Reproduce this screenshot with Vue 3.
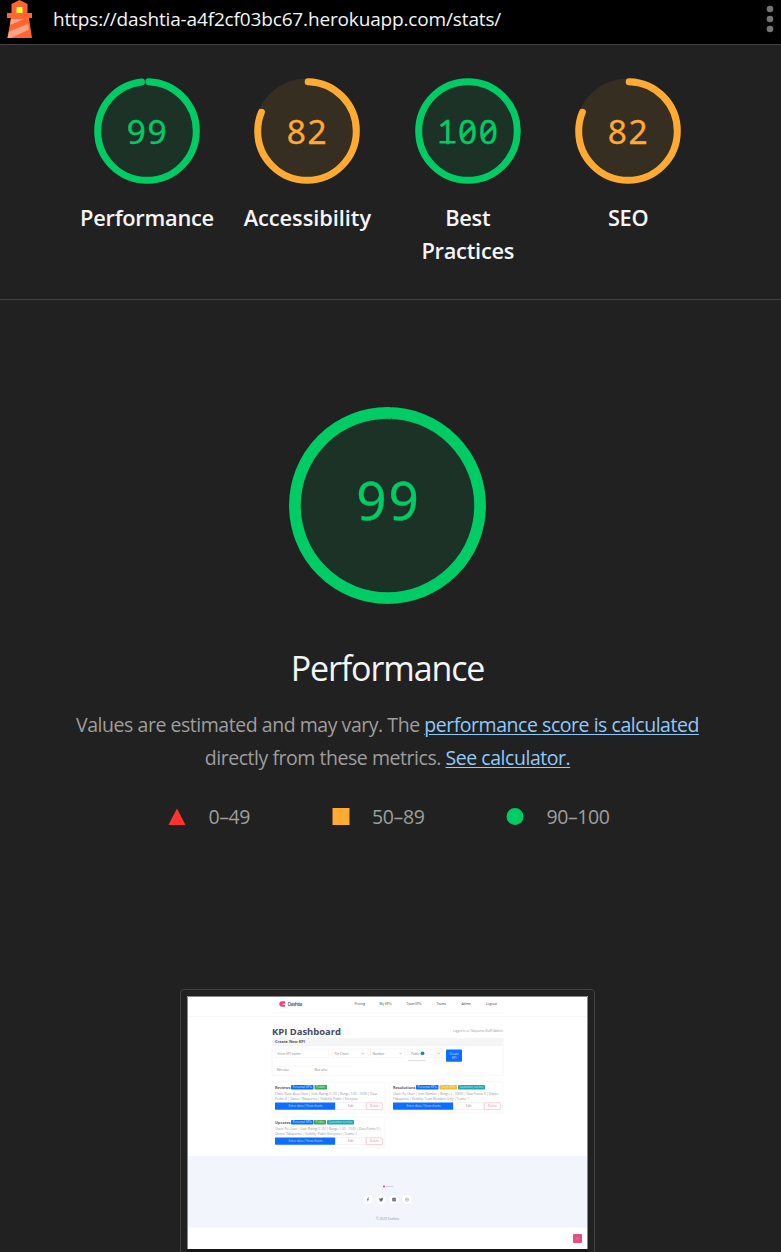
<script setup>
const gauges = [
  { label: 'Performance', score: 99, tone: 'pass', arc: 97.6, start: 0.6 },
  { label: 'Accessibility', score: 82, tone: 'average', arc: 80.8, start: 0.4 },
  { label: 'Best Practices', score: 100, tone: 'pass', arc: 100, start: 0 },
  { label: 'SEO', score: 82, tone: 'average', arc: 80.8, start: 0.4 },
]
const nav = [
  ['Pricing', 354.5, 10.5], ['My KPIs', 379.5, 12], ['Team KPIs', 406.5, 15],
  ['Teams', 436.5, 9.5], ['Admin', 461.5, 9.5], ['Logout', 486, 11],
]
const cards = [
  {
    x: 275, y: 1084.5, name: 'Reviews', nameW: 15.5,
    tags: [['Personal KPIs', 291, 22.5, '#0d6efd'], ['Public', 314.5, 12.5, '#34a853']],
    lines: [['Chart: Data: Area Chart | Unit: Rating (1-10) | Range: 1.00 - 10.00 | Data', 102], ['Points: 8 | Owner: Tkbaparina | Visibility: Public | Everyone', 83]],
  },
  {
    x: 393, y: 1084.5, name: 'Resolutions', nameW: 22.5,
    tags: [['Personal KPIs', 416, 22.5, '#0d6efd'], ['Team KPIs', 439.5, 17.5, '#fbbc2c'], ['Customer service', 458, 27, '#20a8b0']],
    lines: [['Chart: Pie Chart | Unit: Number | Range: + - 10000 | Data Points: 0 | Owner:', 106], ['Tkbaparina | Visibility: Team Members Only | Teams: 1', 76]],
  },
  {
    x: 275, y: 1119.5, name: 'Upvotes', nameW: 15.5,
    tags: [['Personal KPIs', 291, 22.5, '#0d6efd'], ['Public', 314, 12, '#34a853'], ['Customer service', 327, 27, '#20a8b0']],
    lines: [['Chart: Pie Chart | Unit: Rating (1-10) | Range: 1.00 - 10.00 | Data Points: 0 |', 106], ['Owner: Tkbaparina | Visibility: Public (Everyone) | Teams: 1', 82]],
  },
]
</script>

<template>
  <main class="report">
    <header class="topbar">
      <svg class="logo" width="26" height="39" viewBox="0 0 26 39">
        <path fill="#ff6633" d="M4.500 4 12.500 0l8 4v9h4.500v5h-3l3 20H.500L4 18H0v-5h4.500z" />
        <path fill="#ffa385" d="M4 19h13L3 25zM2 31.500l19-7.500 1 5.500-18 8.500H.500z" />
        <path fill="#ffff33" d="M9.500 7h6v6h-6z" />
      </svg>
      <span class="url">https://dashtia-a4f2cf03bc67.herokuapp.com/stats/</span>
      <svg class="menu" width="8" height="29" viewBox="0 0 8 29">
        <circle cx="4" cy="4" r="3.300" /><circle cx="4" cy="14" r="3.300" /><circle cx="4" cy="24" r="3.300" />
      </svg>
    </header>

    <section class="scores">
      <div v-for="g in gauges" :key="g.label" class="gauge" :class="g.tone">
        <svg width="106" height="106" viewBox="0.500 0.500 106 106">
          <circle class="disc" cx="53.500" cy="53.500" r="52.500" />
          <circle
            class="arc" cx="53.500" cy="53.500" r="49.300" pathLength="100"
            :stroke-dasharray="g.arc === 100 ? 'none' : `${g.arc} 100`"
            :stroke-dashoffset="-g.start" transform="rotate(-90 53.500 53.500)"
          />
          <text class="num" x="54" y="66">{{ g.score }}</text>
          <path v-if="g.score === 100" class="foot" d="M25 64.700h16" />
        </svg>
        <span class="label">{{ g.label }}</span>
      </div>
    </section>

    <section class="category">
      <svg class="big pass" width="197" height="197" viewBox="0.500 0.500 197 197">
        <circle class="disc" cx="99" cy="99" r="97" />
        <circle class="arc" cx="99" cy="99" r="92.600" />
        <path d="M102 .2l2 0-1 .7zM102 12.200l2 0-1-.7z" fill="#1f3027" />
        <text class="num" x="100" y="113.500">99</text>
      </svg>
      <h1>Performance</h1>
      <p class="desc">
        <span class="l1">Values are estimated and may vary. The <a>performance score is calculated</a></span>
        <span class="l2">directly from these metrics. <a>See calculator.</a></span>
      </p>
      <div class="legend">
        <span class="item"><svg width="18" height="18"><path d="M9 .5 17.500 17H.500z" fill="#ff3333" /></svg>0–49</span>
        <span class="item"><svg width="18" height="18"><path d="M.5 0h17v17H.500z" fill="#ffaa33" /></svg>50–89</span>
        <span class="item"><svg width="18" height="18"><circle cx="9" cy="8.500" r="8.500" fill="#00cc66" /></svg>90–100</span>
      </div>
    </section>

    <div class="frame">
      <svg class="shot" width="401" height="253" viewBox="187 996 401 253">
        <path fill="#fff" d="M187 996h401v253H187z" />
        <path fill="#f2f5fb" d="M187 1156h401v71.500H187z" />
        <path stroke="#f5f5f5" stroke-width=".7" d="M187 1016.500h401M272 1012.500h231" />
        <path fill="#e8457c" d="M282 1001.300c-3.600 0-3.600 5.400 0 5.400h3v-2h-2.500v-1h2.800v-1.200c0-.8-.5-1.200-1.200-1.200z" />
        <text x="287.500" y="1005.800" font-size="5" font-weight="600" fill="#55566a" textLength="15">Dashtia</text>
        <text v-for="n in nav" :key="n[0]" :x="n[1]" y="1005.200" font-size="3.200" fill="#444" :textLength="n[2]" lengthAdjust="spacingAndGlyphs">{{ n[0] }}</text>
        <text x="272" y="1035.300" font-size="9.600" font-weight="700" fill="#444761" textLength="69" lengthAdjust="spacingAndGlyphs">KPI Dashboard</text>
        <text x="453" y="1032.300" font-size="3" fill="#999" textLength="50" lengthAdjust="spacingAndGlyphs">Logged in as: Tkbaparina (Staff) (Admin)</text>
        <path fill="#f5f5f6" d="M272 1038h231.500v8H272z" />
        <text x="275" y="1043.300" font-size="4" font-weight="700" fill="#555" textLength="30" lengthAdjust="spacingAndGlyphs">Create New KPI</text>
        <g fill="none" stroke="#f1f1f1" stroke-width=".6">
          <path d="M272 1046v29.500h231.500v-29.500M275.500 1049h53v8.500h-53zM332 1049h36v8.500h-36zM370.500 1049h34v8.500h-34zM408 1049h34v8.500h-34zM275.500 1066h76" />
          <path stroke="#888" stroke-width=".5" d="M361.500 1053l1.200.8 1.200-.8M399.500 1053l1.200.8 1.200-.8M437.500 1053l1.200.8 1.200-.8" />
        </g>
        <g font-size="3.200" fill="#888">
          <text x="277.500" y="1054.600" textLength="23" lengthAdjust="spacingAndGlyphs">Enter KPI name</text>
          <text x="334.500" y="1054.600" textLength="14">Pie Chart</text>
          <text x="372.500" y="1054.600" textLength="12">Number</text>
          <text x="411" y="1054.600" textLength="8.500">Public</text>
          <text x="408.500" y="1060.500" font-size="2.500" textLength="17">Public (for all)</text>
          <text x="277" y="1071.300" font-size="2.800" textLength="12">Min value</text>
          <text x="314.500" y="1071.300" font-size="2.800" textLength="13">Max value</text>
        </g>
        <circle cx="422.500" cy="1053.300" r="1.900" fill="#248d91" />
        <rect x="446" y="1049.500" width="16" height="12.300" rx="1" fill="#0d6efd" />
        <g font-size="3" fill="#d2e4ff" text-anchor="middle"><text x="454" y="1054.500">Create</text><text x="454" y="1058.800">KPI</text></g>
        <path fill="none" stroke="#f4f4f6" stroke-width=".6" d="M272 1082h113v31H272zM390 1082h113v31H390zM272 1117h113v31H272z" />
        <g v-for="c in cards" :key="c.name">
          <text :x="c.x" :y="c.y + 4" font-size="4" font-weight="700" fill="#5a5b68" :textLength="c.nameW" lengthAdjust="spacingAndGlyphs">{{ c.name }}</text>
          <g v-for="t in c.tags" :key="t[0]">
            <rect :x="t[1]" :y="c.y + .5" :width="t[2]" height="4.600" rx=".8" :fill="t[3]" />
            <text :x="t[1] + 1.500" :y="c.y + 3.800" font-size="2.800" fill="#d8ecff" :textLength="t[2] - 3" lengthAdjust="spacingAndGlyphs">{{ t[0] }}</text>
          </g>
          <text v-for="(l, i) in c.lines" :key="i" :x="c.x" :y="c.y + 10.200 + i * 5.600" font-size="3.100" fill="#8f8f98" :textLength="l[1]" lengthAdjust="spacingAndGlyphs">{{ l[0] }}</text>
          <rect :x="c.x" :y="c.y + 18" width="60.500" height="7.200" rx=".6" fill="#0d6efd" />
          <rect :x="c.x + 60.500" :y="c.y + 18.300" width="30.500" height="6.800" fill="#fff" stroke="#ececf0" stroke-width=".6" />
          <rect :x="c.x + 91.300" :y="c.y + 18.300" width="16" height="6.800" rx=".6" fill="#fff" stroke="#ebbfc6" stroke-width=".7" />
          <text :x="c.x + 13.500" :y="c.y + 22.700" font-size="3" fill="#c9dfff" textLength="34" lengthAdjust="spacingAndGlyphs">Enter data / View charts</text>
          <text :x="c.x + 73" :y="c.y + 22.700" font-size="3" fill="#8d8d95">Edit</text>
          <text :x="c.x + 95" :y="c.y + 22.700" font-size="3" fill="#d9828f">Delete</text>
        </g>
        <circle cx="384" cy="1186.500" r="1" fill="#c24595" />
        <text x="386" y="1187.300" font-size="2" fill="#b98bb8">Dashtia</text>
        <g fill="#fff"><circle cx="368" cy="1199.500" r="4.600" /><circle cx="381" cy="1199.500" r="4.600" /><circle cx="394" cy="1199.500" r="4.600" /><circle cx="407" cy="1199.500" r="4.600" /></g>
        <g fill="none" stroke="#60647a" stroke-width=".7">
          <path d="M369 1197.900c-1.300-.2-1.200.6-1.200 1.200v2.200M367 1199.500h1.800" />
          <path fill="#60647a" stroke-width=".3" d="M379.500 1198.200l1.500.9c.2-1.400 1.300-1.200 1.900-.7-.3 3-2 3.300-3.300 2.600l.9-.6c-.9-.5-1.100-1.300-1-2.200z" />
          <path fill="#9599aa" d="M392.600 1198.100h2.900v2.900h-2.900zM394 1198.100v2.900" />
          <rect x="405.500" y="1198.100" width="3" height="3" rx=".8" stroke="#aaa" /><circle cx="407" cy="1199.600" r=".5" stroke="#aaa" />
        </g>
        <text x="376" y="1220" font-size="3.300" fill="#8c8f9b" textLength="23" lengthAdjust="spacingAndGlyphs">© 2023 Dashtia</text>
        <rect x="573" y="1234" width="9" height="9" rx=".8" fill="#e64f83" />
        <path d="M576.300 1239l1.200-.8 1.200.8" fill="none" stroke="#f6c4d5" stroke-width=".6" />
        <path d="M187.500 1249v-252.500h400v252.500" fill="none" stroke="#888" />
      </svg>
      <div class="strip"></div>
    </div>
  </main>
</template>

<style>
body { background: #212121; }
</style>

<style scoped>
.report { width: 781px; height: 1252px; overflow: hidden; background: #212121; color: #f5f5f5; font-family: "Open Sans", "Noto Sans", sans-serif; }
.topbar { height: 44px; background: #000; border-bottom: 1px solid #424242; display: flex; align-items: flex-start; padding-left: 7px; }
.url { margin-left: 20px; font-size: 19px; line-height: 39px; white-space: nowrap; letter-spacing: -.15px; }
.menu { margin: 5px 7.500px 0 auto; fill: #757575; }
.scores { box-sizing: border-box; height: 255px; border-bottom: 1px solid #424242; padding: 33px 0 0 66.800px; display: grid; grid-template-columns: repeat(4, 160.400px); }
.gauge { display: flex; flex-direction: column; align-items: center; }
.pass { color: #00cc66; }
.average { color: #ffaa33; }
.disc { fill: currentColor; fill-opacity: .1; }
.arc { fill: none; stroke: currentColor; stroke-width: 7; stroke-linecap: round; }
.num { fill: currentColor; stroke: currentColor; stroke-width: .3; font: 33.500px "Noto Sans", sans-serif; font-feature-settings: "zero"; letter-spacing: 1.600px; text-anchor: middle; }
.foot { stroke: currentColor; stroke-width: 2.500; }
.label { margin-top: 17px; width: 140px; text-align: center; color: #f5f5f5; font-size: 21.800px; font-weight: 600; line-height: 33px; letter-spacing: -.25px; }
.gauge:nth-child(2) .label { letter-spacing: -.05px; }
.gauge:nth-child(3) .label { width: 110px; }
.category { width: 775px; padding-top: 107px; display: flex; flex-direction: column; align-items: center; }
.big .arc { stroke-width: 11.700; }
.big .num { font-size: 53px; letter-spacing: 2px; }
h1 { margin: 39px 0 0; font-size: 34px; font-weight: 400; line-height: 50px; letter-spacing: -1.100px; }
.desc { margin: 15px 0 0; color: #9e9e9e; font-size: 19.500px; line-height: 33px; text-align: center; }
.desc span { display: block; white-space: nowrap; letter-spacing: -.46px; }
a { color: #90caf9; text-decoration: underline; text-decoration-thickness: 1px; text-underline-offset: 2px; }
.legend { margin-top: 26px; padding-left: 2.500px; display: flex; gap: 81.500px; color: #9e9e9e; font-size: 19.500px; line-height: 33px; letter-spacing: -.4px; }
.item { display: flex; align-items: center; gap: 22.500px; }
.frame { box-sizing: border-box; width: 415px; height: 270px; margin: 156px 0 0 180px; border: 1px solid #424242; border-radius: 4px; padding: 6px 6px 0; }
.shot { display: block; font-family: "Open Sans", sans-serif; }
.strip { height: 8px; background: #171717; }
</style>
